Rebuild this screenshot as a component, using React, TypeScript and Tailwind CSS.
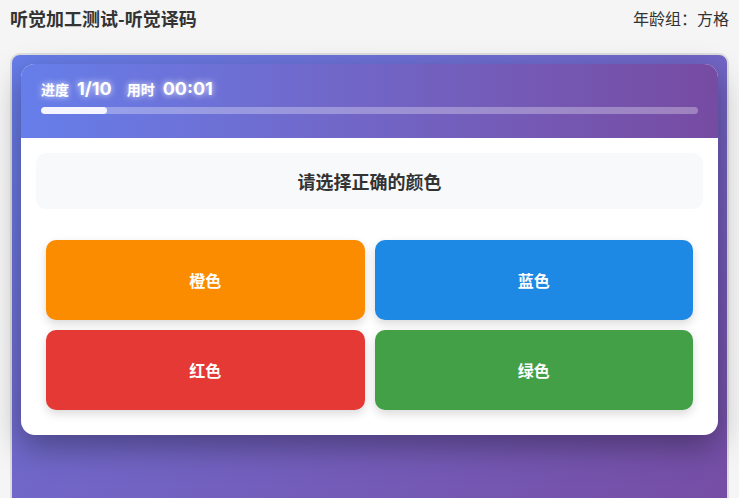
import React from 'react';

const options = [
  { label: '橙色', color: 'bg-[#fb8c00]' },
  { label: '蓝色', color: 'bg-[#1e88e5]' },
  { label: '红色', color: 'bg-[#e53935]' },
  { label: '绿色', color: 'bg-[#43a047]' },
];

const glow = { textShadow: '0 0 6px rgba(255,255,255,0.9)' };

export default function App() {
  const progress = 10;

  return (
    <div className="min-h-screen overflow-hidden bg-[#f5f5f5] font-['Noto_Sans_CJK_SC','Noto_Sans',sans-serif] text-[#333]">
      <div className="flex h-[36px] items-center justify-between px-[10px]">
        <h1 className="text-[18px] font-bold">听觉加工测试-听觉译码</h1>
        <span className="text-[16px]">年龄组：方格</span>
      </div>

      <div className="mx-[10px] mt-[17px] h-[480px] rounded-[10px] border-2 border-[#dedede] bg-gradient-to-br from-[#667eea] to-[#764ba2] p-[9px]">
        <div className="overflow-hidden rounded-[14px] bg-white shadow-[0_12px_32px_rgba(0,0,0,0.35)]">
          <div className="bg-gradient-to-r from-[#667eea] to-[#764ba2] px-[20px] pt-[11px] pb-[24px] text-white">
            <div className="flex items-baseline font-bold">
              <span className="text-[14px]" style={glow}>进度</span>
              <span className="ml-[8px] font-['Inter',sans-serif] text-[18px]" style={glow}>1/10</span>
              <span className="ml-[15px] text-[14px]" style={glow}>用时</span>
              <span className="ml-[8px] font-['Inter',sans-serif] text-[18px]" style={glow}>00:01</span>
            </div>
            <div className="mt-[5px] h-[7px] overflow-hidden rounded-full bg-white/30">
              <div className="h-full rounded-full bg-[#f5f5ff]" style={{ width: `${progress}%` }} />
            </div>
          </div>

          <div className="p-[15px] pb-[25px]">
            <div className="flex h-[56px] items-center justify-center rounded-[10px] bg-[#f8f9fa] text-[18px] font-bold">
              请选择正确的颜色
            </div>
            <div className="mt-[31px] grid grid-cols-2 gap-[10px] px-[10px]">
              {options.map((o) => (
                <button
                  key={o.label}
                  className={`flex h-[80px] items-center justify-center rounded-[10px] text-[16px] font-bold text-white shadow-[0_4px_10px_rgba(0,0,0,0.15)] ${o.color}`}
                >
                  {o.label}
                </button>
              ))}
            </div>
          </div>
        </div>
      </div>
    </div>
  );
}
